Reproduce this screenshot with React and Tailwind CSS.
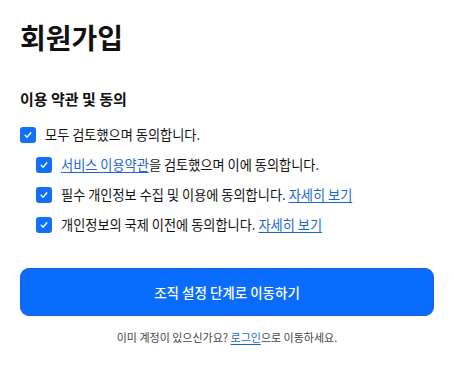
import React from "react";

function Check({ className = "" }) {
  return (
    <span className={"flex h-4 w-4 shrink-0 items-center justify-center rounded-[3px] bg-[#1170f5] " + className}>
      <svg viewBox="0 0 16 16" className="h-[10px] w-[10px]" fill="none" stroke="white" strokeWidth="2.2" strokeLinecap="round" strokeLinejoin="round">
        <path d="M3.5 8.5l3 3 6-7" />
      </svg>
    </span>
  );
}

export default function App() {
  return (
    <div className="h-[371px] w-[454px] bg-white px-5 pt-[17px] text-[#111]" style={{ fontFamily: '"Noto Sans CJK KR", "Noto Sans", sans-serif' }}>
      <h1 className="text-[28px] font-bold leading-[40px]">회원가입</h1>
      <h2 className="mt-[31px] text-[15px] font-semibold leading-[22px]">이용 약관 및 동의</h2>
      <div className="mt-[17px] flex flex-col">
        <label className="flex h-[16px] items-center gap-[9px] text-[13.2px]">
          <Check />
          <span>모두 검토했으며 동의합니다.</span>
        </label>
        <div className="mt-[14px] flex flex-col gap-[14px] pl-4">
          <label className="flex h-[16px] items-center gap-[9px] text-[13.2px]">
            <Check />
            <span><a className="text-[#1a66d9] underline underline-offset-2">서비스 이용약관</a>을 검토했으며 이에 동의합니다.</span>
          </label>
          <label className="flex h-[16px] items-center gap-[9px] text-[13.2px]">
            <Check />
            <span>필수 개인정보 수집 및 이용에 동의합니다. <a className="text-[#1a66d9] underline underline-offset-2">자세히 보기</a></span>
          </label>
          <label className="flex h-[16px] items-center gap-[9px] text-[13.2px]">
            <Check />
            <span>개인정보의 국제 이전에 동의합니다. <a className="text-[#1a66d9] underline underline-offset-2">자세히 보기</a></span>
          </label>
        </div>
      </div>
      <button className="mt-[35px] flex h-[48px] w-full items-center justify-center rounded-[9px] border border-[#1d5fd0] bg-[#0a6bff] text-[13.5px] font-medium text-white">
        조직 설정 단계로 이동하기
      </button>
      <p className="mt-[13px] text-center text-[11px] text-[#444]">
        이미 계정이 있으신가요? <a className="text-[#1a66d9] underline underline-offset-2">로그인</a>으로 이동하세요.
      </p>
    </div>
  );
}
